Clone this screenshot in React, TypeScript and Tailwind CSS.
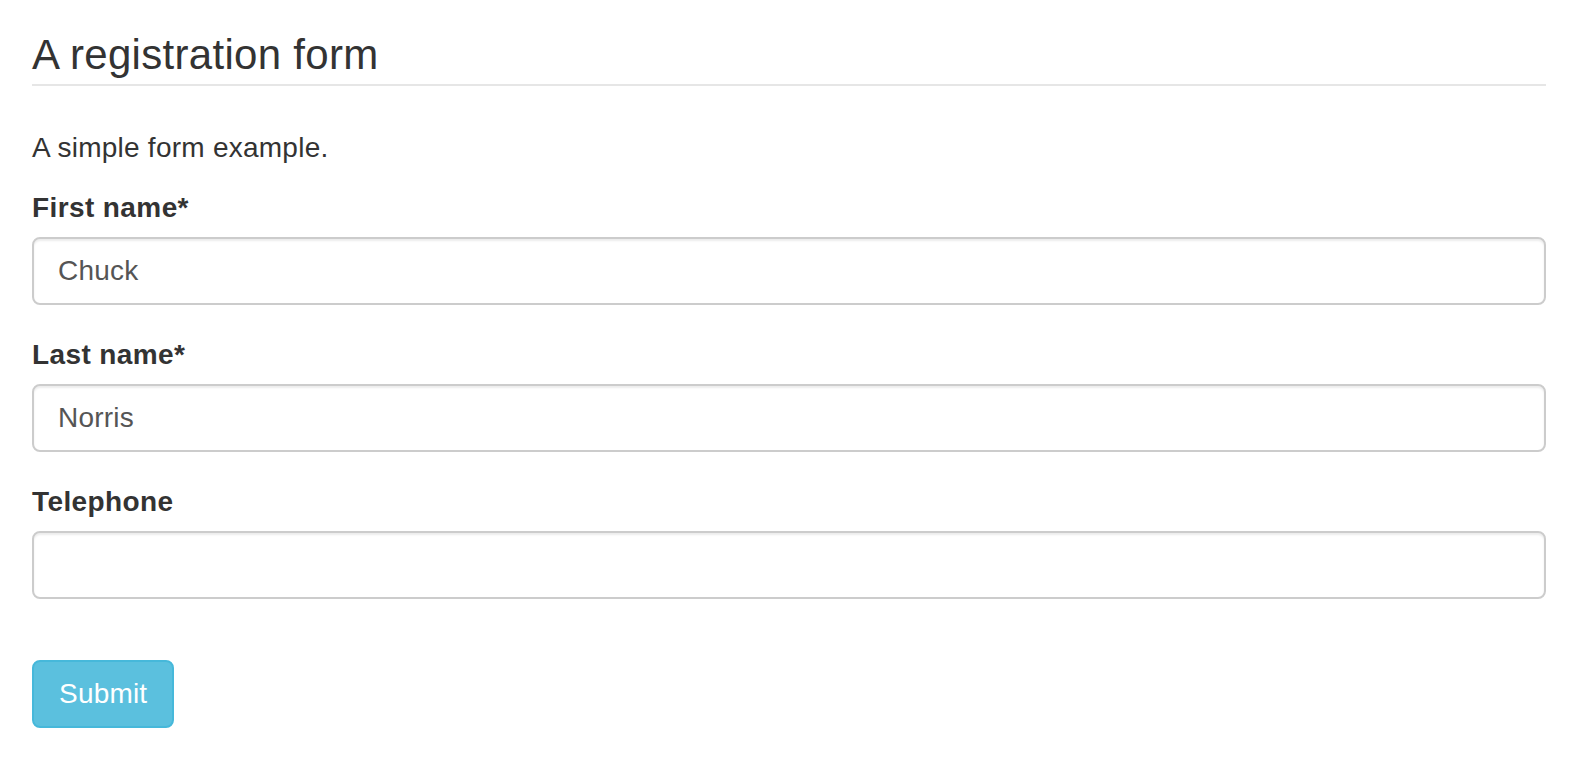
import React from "react";

const font = { fontFamily: '"Liberation Sans", Arial, Helvetica, sans-serif' };

function Field({ label, value }: { label: string; value: string }) {
  return (
    <div className="mb-[30px]">
      <label className="block mb-[9px] text-[28px] leading-[40px] font-bold tracking-[0.4px] text-[#333333]">{label}</label>
      <input
        type="text"
        defaultValue={value}
        className="block w-full h-[68px] px-[24px] text-[28px] leading-[40px] tracking-[0.2px] text-[#555555] bg-white border-2 border-[#cccccc] rounded-[8px] shadow-[inset_0_2px_2px_rgba(0,0,0,0.075)] outline-none"
        style={font}
      />
    </div>
  );
}

export default function App() {
  return (
    <div className="bg-white min-h-[760px]" style={font}>
      <div className="ml-[32px] w-[1514px]">
        <h2 className="mt-[32px] pb-[6px] text-[42px] leading-[46px] font-normal tracking-[0.3px] text-[#333333] border-b-2 border-[#e6e6e6]">
          A registration form
        </h2>
        <p className="mt-[42px] mb-[20px] text-[28px] leading-[40px] tracking-[0.25px] text-[#333333]">A simple form example.</p>
        <form onSubmit={(e) => e.preventDefault()}>
          <Field label="First name*" value="Chuck" />
          <Field label="Last name*" value="Norris" />
          <Field label="Telephone" value="" />
          <button
            type="submit"
            className="mt-[31px] h-[68px] px-[25px] text-[28px] leading-[40px] tracking-[0.2px] text-white bg-[#5bc0de] border-2 border-[#46b8da] rounded-[8px]"
            style={font}
          >
            Submit
          </button>
        </form>
      </div>
    </div>
  );
}
